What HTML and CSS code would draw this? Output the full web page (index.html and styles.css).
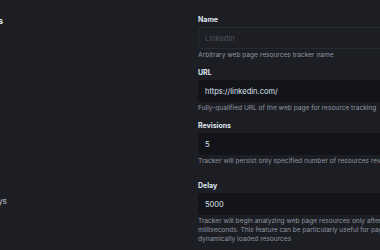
FILE: index.html
```html
<!DOCTYPE html>
<html lang="en">
<head>
  <meta charset="UTF-8">
  <title>Tracker settings</title>
  <link rel="stylesheet" href="styles.css">
</head>
<body>
<div class="layout">
  <div class="aside">
    <h3 class="aside-title">Tracker details</h3>
    <p class="aside-text">Retention period in days</p>
  </div>
  <form class="fields">
    <div class="group">
      <label class="label">Name</label>
      <input class="input input-disabled" type="text" placeholder="Linkedin" disabled>
      <div class="help">Arbitrary web page resources tracker name</div>
    </div>
    <div class="group">
      <label class="label">URL</label>
      <input class="input" type="text" value="https://linkedin.com/">
      <div class="help">Fully-qualified URL of the web page for resource tracking</div>
    </div>
    <div class="group">
      <label class="label">Revisions</label>
      <input class="input" type="text" value="5">
      <div class="help">Tracker will persist only specified number of resources revisions</div>
    </div>
    <div class="group group-wide">
      <label class="label">Delay</label>
      <input class="input" type="text" value="5000">
      <div class="help">Tracker will begin analyzing web page resources only after a specified number of milliseconds. This feature can be particularly useful for pages that contain dynamically loaded resources</div>
    </div>
  </form>
</div>
</body>
</html>
```

FILE: styles.css
```css
*{
  margin: 0;
  padding: 0;
  box-sizing: border-box;
}
body{
  background-color: #1d1e24;
  font-family: Inter, "Noto Sans", sans-serif;
  overflow: hidden;
}
.layout{
  display: flex;
  padding-top: 15px;
}
/*左侧说明栏，只露出一点点*/
.aside{
  width: 190px;
  margin-left: -182px;
  flex-shrink: 0;
  text-align: right;
}
.aside-title{
  font-size: 9px;
  line-height: 11px;
  font-weight: 700;
  color: #dfe5ef;
  padding-right: 5px;
}
.aside-text{
  margin-top: 170px;
  font-size: 8px;
  line-height: 11px;
  font-weight: 600;
  color: #98a2b3;
  padding-right: 1px;
}
/*表单列，右侧超出窗口*/
.fields{
  width: 262px;
  flex-shrink: 0;
  margin-left: 190px;
}
.group{
  margin-bottom: 8px;
}
.group-wide{
  margin-top: 15px;
}
.label{
  display: block;
  font-size: 7px;
  line-height: 10px;
  font-weight: 700;
  color: #dfe5ef;
  margin-bottom: 2px;
}
.input{
  display: block;
  width: 100%;
  height: 22px;
  padding: 0 7px;
  border: none;
  border-radius: 3px;
  background-color: #131419;
  font-family: inherit;
  font-size: 7.5px;
  color: #dfe5ef;
  outline: none;
}
.input-disabled{
  background-color: #1e1f25;
  box-shadow: inset 0 0 0 1px #282a31;
}
.input::placeholder{
  color: #4e5360;
}
.help{
  margin-top: 2px;
  font-size: 6.6px;
  line-height: 9px;
  color: #8e95a2;
}
```
